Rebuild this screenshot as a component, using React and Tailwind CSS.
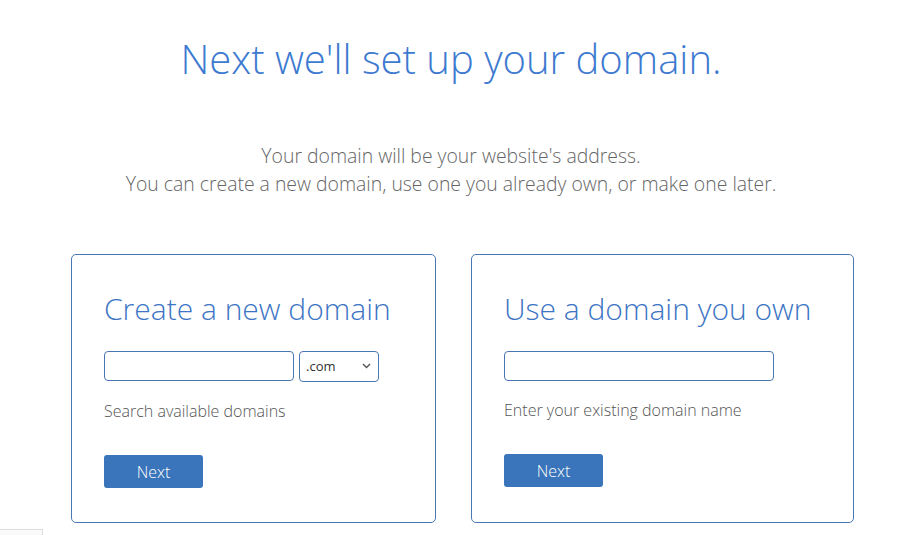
import React from 'react';

function DomainCard({ title, helper, withSelect, width }) {
  return (
    <div
      className={`${width} h-[269px] rounded-[5px] border border-[#4a77b4] px-[32px] pt-[34px]`}
    >
      <h2 className="text-[30px] leading-[40px] font-light text-[#3d75c4] whitespace-nowrap">
        {title}
      </h2>
      <div className="mt-[22px] flex gap-[5px]">
        {withSelect ? (
          <>
            <input
              type="text"
              className="w-[190px] h-[30px] rounded-[4px] border border-[#4a77b4] bg-white outline-none"
            />
            <div className="relative w-[80px] h-[31px] rounded-[4px] border border-[#4a77b4] bg-white flex items-center pl-[6px] text-[13px] text-[#333]">
              .com
              <svg
                className="absolute right-[7px] top-[11px]"
                width="9"
                height="6"
                viewBox="0 0 9 6"
                fill="none"
              >
                <path d="M1 1l3.5 3.5L8 1" stroke="#555" strokeWidth="1.4" />
              </svg>
            </div>
          </>
        ) : (
          <input
            type="text"
            className="w-[270px] h-[30px] rounded-[4px] border border-[#4a77b4] bg-white outline-none"
          />
        )}
      </div>
      <p className="mt-[18px] text-[16px] leading-[22px] font-light text-[#555]">{helper}</p>
      <button className="mt-[33px] w-[99px] h-[33px] rounded-[3px] bg-[#3a74ba] text-white text-[16px] font-light">
        Next
      </button>
    </div>
  );
}

export default function App() {
  return (
    <div
      className="relative w-[902px] h-[535px] overflow-hidden bg-white"
      style={{ fontFamily: '"Open Sans", "Liberation Sans", sans-serif' }}
    >
      <h1 className="pt-[31px] text-center text-[40px] leading-[56px] font-light text-[#3d7ad0]">
        Next we'll set up your domain.
      </h1>
      <div className="mt-[55px] text-center text-[19.4px] leading-[28px] font-light text-[#666]">
        <p>Your domain will be your website's address.</p>
        <p>You can create a new domain, use one you already own, or make one later.</p>
      </div>
      <div className="mt-[56px] flex gap-[35px] pl-[71px]">
        <DomainCard
          title="Create a new domain"
          helper="Search available domains"
          withSelect
          width="w-[365px]"
        />
        <DomainCard
          title="Use a domain you own"
          helper="Enter your existing domain name"
          width="w-[383px]"
        />
      </div>
      <div className="absolute left-0 bottom-0 w-[43px] h-[6px] border-t border-r border-[#ddd] bg-[#fafafa]" />
    </div>
  );
}
